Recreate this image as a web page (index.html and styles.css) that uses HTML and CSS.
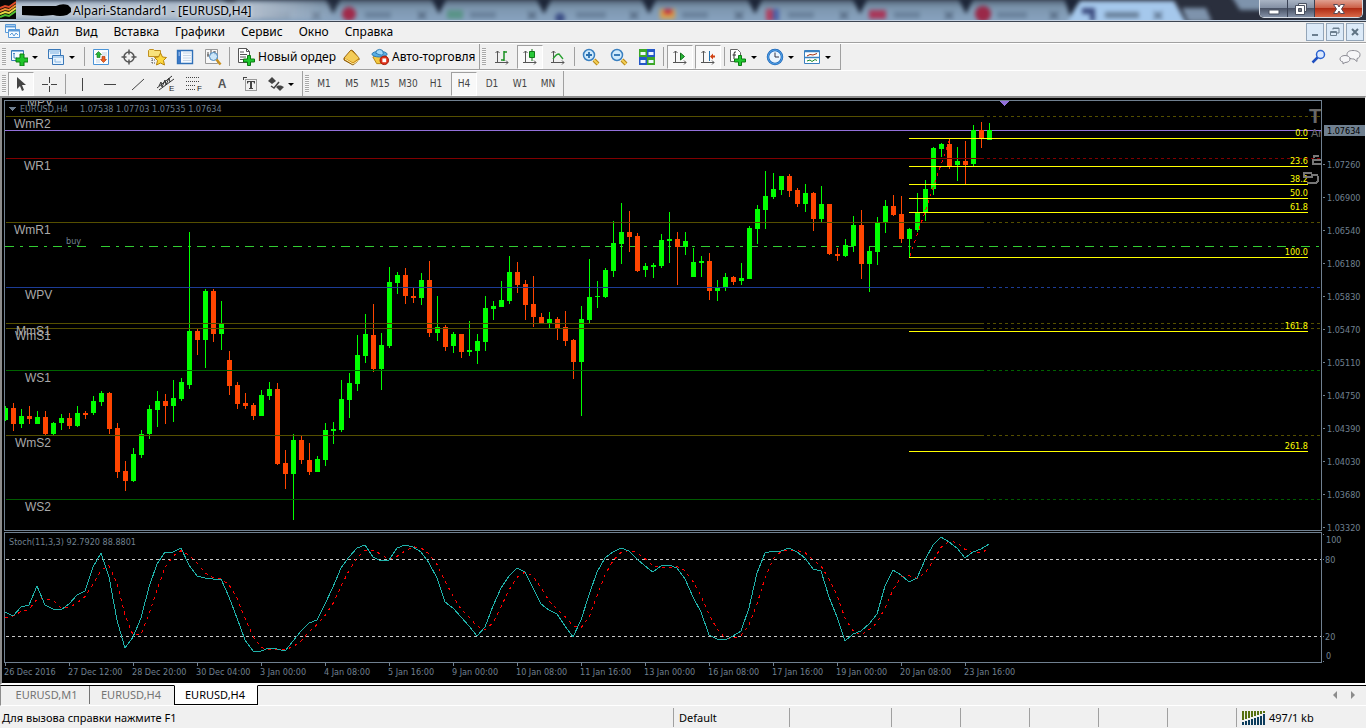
FILE: index.html
```html
<!DOCTYPE html>
<html lang="ru">
<head>
<meta charset="utf-8">
<title>Alpari-Standard1 - [EURUSD,H4]</title>
<link rel="stylesheet" href="styles.css">
</head>
<body>
<header class="titlebar">
  <svg class="glass" aria-hidden="true">
    <defs>
      <linearGradient id="gl" x1="0" y1="0" x2="0" y2="1"><stop offset="0" stop-color="#54667a"/><stop offset=".3" stop-color="#7d96ae"/><stop offset="1" stop-color="#8ca8c6"/></linearGradient>
      <linearGradient id="fade" x1="0" x2="1" y1="0" y2="0"><stop offset="0" stop-color="#b9c5d3"/><stop offset=".75" stop-color="#afbccb"/><stop offset="1" stop-color="#afbccb" stop-opacity="0"/></linearGradient>
    </defs>
    <rect width="100%" height="24" fill="#2a2f3d"/>
    <g class="soft">
      <rect x="-9" width="1080" height="26" fill="url(#gl)"/>
      <path d="M1066 26 1078 1h96l14 25z" fill="#a5c8ec"/>
      <path d="M1182 8h24l6 14h-24zM1230-6h34v16h-24z" fill="#7e93ac"/>
      <path d="M222-2h16l-8 16zM325-2h16l-8 16zM431-2h16l-8 16zM536-2h16l-8 16zM641-2h16l-8 16zM747-2h16l-8 16zM852-2h16l-8 16zM958-2h16l-8 16zM1064-2h18l-12 18z" fill="#1d2638"/>
      <circle cx="349" cy="14" r="7" fill="#a02a4a"/><rect x="447" y="10" width="16" height="9" fill="#5a9488"/><circle cx="560" cy="18" r="5" fill="#3d4f86"/><rect x="660" y="9" width="15" height="10" fill="#d8a04a"/><rect x="664" y="9" width="8" height="5" fill="#c03040"/>
      <rect x="766" y="9" width="7" height="12" fill="#b04060"/><rect x="773" y="9" width="6" height="12" fill="#4a62a8"/><rect x="869" y="10" width="17" height="9" fill="#a8385a"/><circle cx="983" cy="14" r="8" fill="#9a2848"/><path d="M1082 8h13v13h-5v-7h-8z" fill="#3c4c80"/>
      <path d="M260 15h30M365 15h26M470 15h26M576 15h30M682 15h26M788 15h26M894 15h26M997 15h30M1105 15h34" stroke="#6a829c" stroke-width="6"/>
      <path d="m312 12 8 7m0-7-8 7M418 12l8 7m0-7-8 7M528 12l8 7m0-7-8 7M630 12l8 7m0-7-8 7M735 12l8 7m0-7-8 7M840 12l8 7m0-7-8 7M945 12l8 7m0-7-8 7M1050 12l8 7m0-7-8 7M1154 12l8 7m0-7-8 7" stroke="#4d6078" stroke-width="2"/>
    </g>
    <rect y="2" width="340" height="17" fill="url(#fade)" class="soft"/>
  </svg>
  <svg class="applogo" width="16" height="19" viewBox="0 0 16 19"><path fill="#080808" d="M0 0h16v19H0z"/><g fill="none" stroke-width="2"><path stroke="#e04a28" d="m0 8 5-2 4 1 7-5"/><path stroke="#f08a30" d="m0 11 5-2 4 1 7-5"/><path stroke="#e8d840" d="m0 14 5-2 4 1 7-5"/><path stroke="#50c030" d="m0 17 5-2 4 1 7-5"/></g></svg>
  <svg class="redact" width="49" height="13" viewBox="0 0 49 13"><path d="M0 2 34 2Q40-1 46 1L49 4V8L45 11Q38 13 31 11L20 12 0 11z"/></svg>
  <h1>Alpari-Standard1 - [EURUSD,H4]</h1>
  <div class="winbtns">
    <button class="min" aria-label="Свернуть"><svg width="14" height="14"><path d="M2 8h10v4H2z" fill="#fff" stroke="#4b5262"/></svg></button>
    <button class="max" aria-label="Развернуть"><svg width="14" height="14"><path d="M4.500 1.500h8v8h-8z" fill="#eee" stroke="#4b5262"/><path d="M1.500 3.500h9v9h-9z" fill="#fff" stroke="#4b5262"/><path d="M4.500 6.500h3v3h-3z" fill="#777" stroke="#4b5262"/></svg></button>
    <button class="close" aria-label="Закрыть"><svg width="14" height="14"><path d="M1.500 2.500h4L7 5l1.500-2.500h4L9.500 7l3 4.500h-4L7 9l-1.500 2.500h-4L4.500 7z" fill="#fff" stroke="#5a4a55"/></svg></button>
  </div>
</header>

<nav class="menubar">
  <svg class="menuicon" width="16" height="16" viewBox="0 0 16 16" fill="#f4faff" stroke="#5b9ad8"><path d="M.5.500h10v8H.5z"/><path d="M.5 2.500h10" stroke-width="2"/><path d="M3.500 5.500h11v8h-11z"/><path d="M3.500 6.500h11" stroke-width="2"/><path d="m5 11 2-2 2 3 2-3 2 2" fill="none"/></svg>
  <button>Файл</button><button>Вид</button><button>Вставка</button><button>Графики</button><button>Сервис</button><button>Окно</button><button>Справка</button>
  <div class="mdi">
    <button aria-label="Свернуть окно"><svg width="12" height="12"><path d="M3 8h6v2H3z" fill="#6c7f90"/></svg></button>
    <button aria-label="Восстановить окно"><svg width="12" height="12" fill="none" stroke="#6c7f90"><path d="M4 3.500V2h6v5H8M4 2.500h6" /><path d="M1.500 5.500h6v4h-6zM2 6.500h5"/></svg></button>
    <button aria-label="Закрыть окно"><svg width="12" height="12"><path d="m3 3 6 6m0-6L3 9" stroke="#5f7384" stroke-width="2"/></svg></button>
  </div>
</nav>

<div class="toolrow">
  <div class="bar raised">
    <i class="grip"></i>
    <button class="dd" aria-label="Новый график"><svg width="18" height="18" viewBox="0 0 18 18"><path d="M1.500 2.500h12v10h-12z" fill="#f5faff" stroke="#3a78b8"/><path d="M2 3.500h11" stroke="#8ab8e4"/><path d="M4 5v5h3M3 6l1-1 1 1" fill="none" stroke="#4a88c0"/><path d="M10 6h4v4h4v4h-4v4h-4v-4H6v-4h4z" fill="#1fc42a" stroke="#0a7a10"/></svg></button>
    <button class="dd" aria-label="Профили"><svg width="18" height="18" viewBox="0 0 18 18" fill="#e8f3fd" stroke="#3a78b8"><path d="M1.500 1.500h12v9h-12z"/><path d="M2 3h11M3 5h9" stroke="#7cb0e0"/><path d="M5.500 7.500h11v9h-11z"/><path d="M6 9h10" stroke="#7cb0e0"/><path d="M8 11v3h6" fill="none" stroke="#8ab8e4"/></svg></button>
    <i class="sep"></i>
    <button aria-label="Обзор рынка"><svg width="18" height="18" viewBox="0 0 18 18"><path d="M1.500 1.500h15v15h-15z" fill="#fbfdff" stroke="#4a94d8"/><path d="M4 12h4M10 5h5M10 7h5M4 14h4" stroke="#c5d5e5"/><path d="m6.500 3.500 3 3H8v3H5v-3H3.500z" fill="#28b838" stroke="#107018" stroke-width=".6"/><path d="m11.500 14.500-3-3H10v-3h3v3h1.500z" fill="#f06020" stroke="#a03008" stroke-width=".6"/></svg></button>
    <button aria-label="Навигатор"><svg width="18" height="18" viewBox="0 0 18 18" fill="none" stroke="#555"><circle cx="9" cy="9" r="5" stroke-width="1.500"/><path d="M9 1.500v5M9 11.500v5M1.500 9h5M11.500 9h5" stroke-width="1.500"/></svg></button>
    <button aria-label="Окно данных"><svg width="20" height="18" viewBox="0 0 20 18"><path d="M1.500 8.500v-6l1-1h4l1 1h6v6z" fill="#f8e27c" stroke="#c09020"/><path d="M5 10v6M5 12h4M5 15h4" stroke="#555" stroke-dasharray="1 1"/><path d="m13.500 5 2 4 4 .5-3 3 1 4.500-4-2-4 2 1-4.500-3-3 4-.5z" fill="#fcd840" stroke="#b88408"/></svg></button>
    <button aria-label="Терминал"><svg width="18" height="18" viewBox="0 0 18 18"><path d="M1.500 2.500h15v13h-15z" fill="#f5faff" stroke="#2f70b8" stroke-width="1.400"/><path d="M2 3h3v12H2z" fill="#3a78c8"/><path d="M2.500 5H4M2.500 7H4" stroke="#cfe4fa"/><path d="M7 5h8M7 7.500h8M7 10h8M7 12.500h8" stroke="#c8d6e6"/></svg></button>
    <button aria-label="Тестер стратегий"><svg width="18" height="18" viewBox="0 0 18 18"><path d="M1.500 1.500h12v14h-12z" fill="#f8f8f8" stroke="#999"/><path d="M4 4v5M3 7h2M7 2v5M11 3v4M9 4h2" stroke="#555"/><circle cx="9.500" cy="8.500" r="4" fill="#c4e4fa" fill-opacity=".85" stroke="#4a88c0"/><path d="m12.500 11.500 4 5" stroke="#c89020" stroke-width="2.500"/></svg></button>
    <i class="sep"></i>
    <button class="wide"><svg width="19" height="18" viewBox="0 0 19 18"><path d="M1.500.500h8l3 3v11h-11z" fill="#fff" stroke="#555"/><path d="M9.500.500v3h3M3 4h4M3 6.500h7M3 9h6M3 11.500h5" stroke="#555" fill="none"/><path d="M10.500 7.500h3v3.500h4v3h-4v3.500h-3V14h-4v-3h4z" fill="#20c830" stroke="#0a7a10"/></svg>Новый ордер</button>
    <button aria-label="MetaEditor"><svg width="18" height="18" viewBox="0 0 18 18"><path d="m1 10 7-8 2 1 6 7v2l-6 5L1 12z" fill="#c8860c" stroke="#8c5a08"/><path d="m1.500 10 6.500-7.500L16 10l-6 4.500z" fill="#f4cc58"/><path d="m2 11 8 5 6-4" stroke="#fff0b0" fill="none"/></svg></button>
    <button class="wide"><svg width="19" height="18" viewBox="0 0 20 18"><path d="m2 9 7-3 8 3-3 7H6z" fill="#f2c840" stroke="#b08010"/><ellipse cx="9" cy="6" rx="8" ry="3" fill="#58aee4" stroke="#2a78b0"/><path d="M5 5q0-4 4-4t4 4-8 0z" fill="#a0d8f8" stroke="#2a78b0"/><circle cx="14" cy="12.500" r="4.500" fill="#e03018" stroke="#a01808"/><path d="M12 10.500h4v4h-4z" fill="#fff"/></svg>Авто-торговля</button>
  </div>
  <div class="bar raised">
    <i class="grip"></i>
    <button aria-label="Бары"><svg width="18" height="18" viewBox="0 0 18 18" fill="none"><path d="M4.500 3v12M2 14.500h13M2.500 5l2-2 2 2M13 12.500l2 2-2 2" stroke="#555"/><path d="M11 3v10M11 4h3M8 12h3" stroke="#189020" stroke-width="1.500"/></svg></button>
    <button class="on" aria-label="Свечи"><svg width="18" height="18" viewBox="0 0 18 18"><path d="M4.500 3v12M2 14.500h13M2.500 5l2-2 2 2M13 12.500l2 2-2 2" stroke="#555" fill="none"/><path d="M11 1v12" stroke="#107010"/><path d="M8.500 3.500h5v6h-5z" fill="#28c838" stroke="#107818"/></svg></button>
    <button aria-label="Линия"><svg width="18" height="18" viewBox="0 0 18 18" fill="none"><path d="M4.500 3v12M2 14.500h13M2.500 5l2-2 2 2M13 12.500l2 2-2 2" stroke="#555"/><path d="M4 11q3-5 6-5l4 5" stroke="#28a030" stroke-width="1.300"/></svg></button>
    <i class="sep"></i>
    <button aria-label="Увеличить"><svg width="18" height="18" viewBox="0 0 18 18"><path d="m12 12 4 4" stroke="#b88818" stroke-width="4"/><path d="m12 12 4 4" stroke="#f4d058" stroke-width="2"/><circle cx="7" cy="7" r="5.500" fill="#cfeafc" stroke="#3a80c0" stroke-width="1.500"/><path d="M7 4v6M4 7h6" stroke="#2a70b0" stroke-width="1.800"/></svg></button>
    <button aria-label="Уменьшить"><svg width="18" height="18" viewBox="0 0 18 18"><path d="m12 12 4 4" stroke="#b88818" stroke-width="4"/><path d="m12 12 4 4" stroke="#f4d058" stroke-width="2"/><circle cx="7" cy="7" r="5.500" fill="#cfeafc" stroke="#3a80c0" stroke-width="1.500"/><path d="M4 7h6" stroke="#2a70b0" stroke-width="1.800"/></svg></button>
    <button aria-label="Окна мозаикой"><svg width="18" height="18" viewBox="0 0 18 18"><path d="M1 1h8v8H1zM9 9h8v8H9z" fill="#3ca828"/><path d="M9 1h8v8H9zM1 9h8v8H1z" fill="#2458c8"/><path d="M2.500 4h5v3h-5zM10.500 4h5v3h-5zM2.500 12h5v3h-5zM10.500 12h5v3h-5z" fill="#eef6ff"/></svg></button>
    <i class="sep"></i>
    <button class="on" aria-label="Автопрокрутка"><svg width="18" height="18" viewBox="0 0 18 18"><path d="M4.500 3v12M2 14.500h13M2.500 5l2-2 2 2M13 12.500l2 2-2 2" stroke="#555" fill="none"/><path d="m9.500 5 4 3.500-4 3.500z" fill="#28b838" stroke="#107018"/></svg></button>
    <button class="on" aria-label="Сдвиг графика"><svg width="18" height="18" viewBox="0 0 18 18"><path d="M4.500 3v12M2 14.500h13M2.500 5l2-2 2 2M13 12.500l2 2-2 2" stroke="#555" fill="none"/><path d="M10.500 3v10" stroke="#2070b0"/><path d="m11 8.500 3-3v2h2v2h-2v2z" fill="#d04010"/></svg></button>
    <i class="sep"></i>
    <button class="dd" aria-label="Индикаторы"><svg width="18" height="18" viewBox="0 0 18 18"><path d="M1.500 1.500h7l3 3v9h-10z" fill="#fff" stroke="#666"/><path d="M7 4q-2-1-2 2v5M3.500 7H7" stroke="#333" fill="none"/><path d="M9.500 7.500h3v3.500h4v3h-4v3.500h-3V14h-4v-3h4z" fill="#20c830" stroke="#0a7a10"/></svg></button>
    <button class="dd" aria-label="Периоды"><svg width="18" height="18" viewBox="0 0 18 18"><circle cx="9" cy="9" r="7" fill="#eaf5fe" stroke="#1c66b8" stroke-width="2.500"/><circle cx="9" cy="9" r="7" fill="none" stroke="#58a8ec" stroke-width="1"/><path d="M9 4.500V9h4" fill="none" stroke="#334"/></svg></button>
    <button class="dd" aria-label="Шаблоны"><svg width="18" height="18" viewBox="0 0 18 18"><path d="M1.500 2.500h15v13h-15z" fill="#fff" stroke="#3a80c0"/><path d="M2 3.500h14M2 9.500h14" stroke="#3a80c0" stroke-width="1.500"/><path d="m4 8 3-1.500 3 .5 4-1.500" stroke="#a03010" fill="none"/><path d="m4 13 3-1 2 1.500 3-2 2 1" stroke="#188828" fill="none"/></svg></button>
  </div>
  <div class="rightsearch">
    <button aria-label="Поиск"><svg width="16" height="16" viewBox="0 0 16 16"><circle cx="9.500" cy="5.500" r="4" fill="#dbe9ff" stroke="#2a62d0" stroke-width="1.500"/><path d="m6.500 8.500-5 5" stroke="#2050c0" stroke-width="2.500"/></svg></button>
    <button aria-label="Чат"><svg width="22" height="16" viewBox="0 0 22 16" fill="#f6f6f8" stroke="#8c8c94"><path d="M14 1.500c4 0 7 1.500 7 4s-1 3.500-3 4v3l-3-2.500c-4 0-7-1.500-7-4.500 0-2.500 2-4 6-4z"/><path d="M6 6.500c3 0 5 1.500 5 3.500s-2 3.500-5 3.500L4 15v-2c-2-.5-3-1.500-3-3 0-2 2-3.500 5-3.500z"/></svg></button>
  </div>
</div>

<div class="toolrow second">
  <div class="bar">
    <i class="grip"></i>
    <button class="on" aria-label="Курсор"><svg width="18" height="18" viewBox="0 0 18 18"><path d="M5 2v12l3-3 2 5 2-1-2-5h4z" fill="#444"/></svg></button>
    <button aria-label="Перекрестие"><svg width="18" height="18" viewBox="0 0 18 18"><path d="M9.500 2v6M9.500 11v6M2 9.500h6M11 9.500h6" stroke="#444"/></svg></button>
    <i class="sep"></i>
    <button aria-label="Вертикальная линия"><svg width="18" height="18"><path d="M9.500 3v13" stroke="#444"/></svg></button>
    <button aria-label="Горизонтальная линия"><svg width="18" height="18"><path d="M3 9.500h12" stroke="#444"/></svg></button>
    <button aria-label="Трендовая линия"><svg width="18" height="18"><path d="M3 15 15 4" stroke="#444"/></svg></button>
    <button aria-label="Канал"><svg width="20" height="20" viewBox="0 0 20 20" fill="none" stroke="#333"><path d="M1 14 16 2M3 16 18 5M3 12l2-4 1 5 3-7 1 5 3-7 1 4"/><text x="13" y="17" class="mini">E</text></svg></button>
    <button aria-label="Фибоначчи"><svg width="20" height="20" viewBox="0 0 20 20" stroke="#444"><path d="M2 3.500h14M2 7.500h14M2 11.500h10M2 15.500h9" stroke-dasharray="1 1"/><text x="13" y="17" class="mini">F</text></svg></button>
    <button class="glyph">A</button>
    <button aria-label="Метка"><svg width="18" height="18" viewBox="0 0 18 18"><path d="M4.500 4.500h11v11h-11z" fill="none" stroke="#444" stroke-dasharray="1 1"/><path d="M6 6h8v2.500h-1L12.500 7H11v6h1v1H8v-1h1V7H7.500L7 8.500H6zM2 2h4v1H3v2H2z" fill="#444"/></svg></button>
    <button class="dd" aria-label="Стрелки"><svg width="18" height="18" viewBox="0 0 18 18"><path d="m6 2 4 4-4 3-4-3zM14 16l-4-4 2-1.500h3L18 12z" fill="#444"/><path d="m5 11 3 2 5-6" fill="none" stroke="#444" stroke-width="1.500"/></svg></button>
  </div>
  <div class="bar tf">
    <i class="grip"></i>
    <button>M1</button><button>M5</button><button>M15</button><button>M30</button><button>H1</button><button class="on">H4</button><button>D1</button><button>W1</button><button>MN</button>
  </div>
</div>

<main class="chart">
  <svg class="plot" id="price"></svg>
  <svg class="axis" id="price-axis"></svg>
  <svg class="plot" id="stoch"></svg>
  <svg class="axis" id="stoch-axis"></svg>
  <ol class="times"><li>26 Dec 2016</li><li>27 Dec 12:00</li><li>28 Dec 20:00</li><li>30 Dec 04:00</li><li>3 Jan 00:00</li><li>4 Jan 08:00</li><li>5 Jan 16:00</li><li>9 Jan 00:00</li><li>10 Jan 08:00</li><li>11 Jan 16:00</li><li>13 Jan 00:00</li><li>16 Jan 08:00</li><li>17 Jan 16:00</li><li>19 Jan 00:00</li><li>20 Jan 08:00</li><li>23 Jan 16:00</li></ol>
</main>

<div class="tabs">
  <button>EURUSD,M1</button><button>EURUSD,H4</button><button class="active">EURUSD,H4</button>
  <div class="scroll">
    <button aria-label="Назад"><svg width="5" height="8"><path d="M5 0v8L1 4z" fill="#8c8c8c"/></svg></button>
    <button aria-label="Вперёд"><svg width="5" height="8"><path d="M0 0v8l4-4z" fill="#8c8c8c"/></svg></button>
  </div>
</div>

<footer class="status">
  <span class="hint">Для вызова справки нажмите F1</span><span class="c-profile">Default</span><span class="c-date"></span><span class="c-val"></span><span class="c-val"></span><span class="c-val"></span><span class="c-val"></span><span class="c-val"></span>
  <span class="c-net"><svg width="24" height="14" viewBox="0 0 24 14"><path d="M1 0v9M4 0v8M7 0v7M10 0v6M13 0v5M16 0v4M19 0v3M22 0v2" stroke="#56700f" stroke-width="2"/><path d="M1 11v3M4 10v4M7 9v5M10 8v6M13 7v7M16 6v8M19 5v9M22 3v11" stroke="#0c3c5c" stroke-width="2"/></svg>497/1 kb</span>
</footer>
<script src="chart.js"></script>
</body>
</html>
```
FILE: styles.css
```css
* { box-sizing: border-box; }
body {
  margin: 0;
  height: 100vh;
  display: flex;
  flex-direction: column;
  background: #f0f0f0;
  color: #000;
  font: 12px/16px "Noto Sans", "Open Sans", sans-serif;
  overflow: hidden;
}
button { border: 0; background: none; padding: 0; margin: 0; font: inherit; color: inherit; display: flex; align-items: center; justify-content: center; }
svg { display: block; flex: none; }

/* title bar */
.titlebar { position: relative; height: 22px; flex: none; display: flex; align-items: flex-start; border-bottom: 1px solid #3c4450; overflow: hidden; box-shadow: inset 0 -1px #c5d2e2; }
.glass { position: absolute; inset: 0; width: 100%; height: 20px; }
.soft { filter: blur(2px); }
.applogo, .redact, .titlebar h1, .winbtns { position: relative; }
.redact { margin: 4px 2px 0 6px; }
.titlebar h1 { margin: 3px 0 0; font-size: 12px; line-height: 16px; font-weight: 400; white-space: nowrap; text-shadow: 0 0 4px #fff; }
.winbtns { margin: 0 3px 0 auto; display: flex; border: 1px solid #d5dbe4; border-top: 0; border-radius: 0 0 5px 5px; overflow: hidden; }
.winbtns button { height: 17px; background: linear-gradient(#a9b4c4, #8490a4 45%, #4a5366 50%, #8390a6); border-right: 1px solid #3a4254; }
.winbtns .min { width: 28px; }
.winbtns .max { width: 27px; }
.winbtns .close { width: 47px; border: 0; background: linear-gradient(#e0a090, #cc6048 45%, #b02c14 50%, #d86848); }

/* menu */
.menubar { flex: none; height: 21px; display: flex; align-items: center; padding: 0 2px 0 5px; border-bottom: 1px solid #a0a0a0; }
.menuicon { margin-right: 7px; }
.menubar > button { margin-right: 16px; }
.mdi { margin-left: auto; display: flex; gap: 2px; }
.mdi button { width: 18px; height: 18px; background: #dceaf8; border: 1px solid #93a5b8; }

/* toolbars */
.toolrow { flex: none; display: flex; height: 27px; border-top: 1px solid #fff; }
.bar { display: flex; border-right: 1px solid #a0a0a0; height: 26px; padding-right: 2px; }
.raised { border-bottom: 1px solid #a0a0a0; box-shadow: 0 1px #fff; }
.bar button { width: 28px; height: 26px; }
.bar .dd { width: 37px; justify-content: flex-start; padding-left: 2px; gap: 4px; }
.bar .dd::after { content: ""; border: 3px solid transparent; border-top-color: #000; border-bottom: 0; }
.bar .wide { width: auto; padding: 0 2px 0 5px; gap: 2px; white-space: nowrap; }
.bar .on { width: 26px; height: 24px; margin: 1px; background: #f8f8f8; border: 1px solid #a0a0a0; border-right-color: #fff; border-bottom-color: #fff; }
.grip { flex: none; width: 4px; margin: 4px 2px 4px 2px; background: repeating-linear-gradient(#a8a8a8 0 1px, #f8f8f8 1px 2px); }
.sep { flex: none; width: 1px; margin: 3px 2px; background: #a0a0a0; }
.second { height: 26px; }
.second .bar { padding-right: 1px; }
.second .grip { margin-right: 1px; }
.glyph { font: bold 12px/16px "Liberation Sans", sans-serif; color: #555; }
.bar .glyph { font: bold 12px/16px "Liberation Sans", sans-serif; color: #555; }
.mini { font: 8px "Liberation Sans", sans-serif; fill: #222; stroke: none; }
.tf { font: 10px/14px "DejaVu Sans Condensed", "DejaVu Sans", sans-serif; color: #444; }
.rightsearch { margin-left: auto; display: flex; align-items: center; gap: 12px; padding-right: 5px; }

/* chart window */
.chart {
  flex: 1;
  min-height: 0;
  display: grid;
  grid-template: minmax(0, 1fr) 131px 19px / minmax(0, 1fr) 43px;
  row-gap: 1px;
  background: #000;
  border: 2px solid #a0a0a0;
  border-color: #8c8c8c #fff #fff #8c8c8c;
  border-right-width: 1px;
  padding: 2px 0 0 2px;
  font: 9px/12px "DejaVu Sans Condensed", "DejaVu Sans", sans-serif;
  color: #708090;
}
.plot { width: 100%; height: 100%; border: 1px solid #708090; shape-rendering: crispEdges; }
.axis { width: 43px; height: 100%; overflow: visible; shape-rendering: crispEdges; }
.chart text { fill: #708090; }
.chart .pivot { font: 12px "Liberation Sans", sans-serif; fill: #a9a9a9; }
.chart .fib { fill: #ff0; text-anchor: end; }
.chart .bid { fill: #000; }
.chart .mark { font: bold 20px "Liberation Sans", sans-serif; fill: #696969; }
.chart .note { font: 11px "Liberation Sans", sans-serif; fill: #696969; }
.times { grid-column: 1 / -1; margin: -1px 0 0; padding: 0; list-style: none; display: flex; overflow: hidden; white-space: nowrap; }
.times li { flex: 0 0 64px; }
.times li::before { content: ""; display: block; width: 1px; height: 3px; margin-left: 1px; background: #708090; }

/* chart tabs */
.tabs { flex: none; height: 21px; display: flex; align-items: flex-start; border-top: 1px solid #000; border-left: 1px solid #8c8c8c; color: #747474; font-size: 11px; border-bottom: 1px solid #fff; }
.tabs > button { height: 18px; width: 89px; padding-left: 3px; border-right: 1px solid #747474; }
.tabs > button + button { width: 84px; padding: 0 2px 0 0; border: 0; }
.tabs > button.active { background: #fff; color: #000; border: 1px solid #000; border-top-color: #fff; margin-top: -1px; height: 20px; }
.scroll { margin: 5px 10px 0 auto; display: flex; gap: 14px; }

/* status bar */
.status { flex: none; height: 22px; display: flex; padding: 2px 0 1px; font-size: 11px; }
.status span { border-left: 1px solid #a0a0a0; padding: 0 5px; display: flex; align-items: center; gap: 3px; white-space: nowrap; }
.status .hint { flex: 1; border: 0; padding-left: 2px; }
.status .c-profile { width: 116px; }
.status .c-date { width: 102px; }
.status .c-val { width: 69px; }
.status .c-net { width: 130px; }
```
FILE: chart.js
```js
// Candles: high, body top, body bottom, low, direction (1 up, 0 down), one every 8px.
const candles = `406,408,420,421,1 403,408,424,431,0 409,416,424,428,1 406,416,419,424,0 411,417,424,424,1 411,417,434,435,0 422,423,434,435,1 414,418,423,430,1 413,418,426,429,0 406,413,426,427,1 411,413,415,419,0 396,401,413,415,1 391,393,402,406,1 392,393,429,434,0 423,428,472,478,0 461,471,481,491,0 448,454,481,482,1 430,434,455,458,1 405,409,434,439,1 391,401,410,427,1 394,401,406,424,0 380,398,406,422,1 378,382,399,401,1 232,331,385,389,1 329,331,340,355,0 289,291,340,368,1 289,291,334,342,0 301,324,334,350,1 351,360,386,395,0 382,385,404,409,0 393,403,406,409,0 403,405,416,420,0 390,395,416,416,1 382,389,396,400,1 383,389,464,465,0 450,463,474,489,0 434,440,474,520,1 436,440,460,464,0 443,460,472,475,0 456,459,472,472,1 423,430,460,466,1 422,429,431,444,1 380,399,430,432,1 373,383,400,418,1 335,355,384,391,1 314,334,356,363,1 304,335,369,372,0 333,345,369,390,1 267,282,346,348,1 272,275,283,294,1 268,275,296,304,0 287,296,298,303,0 273,280,298,305,1 261,280,333,337,0 296,327,333,341,1 325,327,347,351,0 332,334,346,353,1 334,334,352,358,0 321,350,352,356,1 334,341,351,364,1 296,308,342,351,1 301,306,309,320,1 281,300,307,307,1 256,272,301,304,1 262,272,285,293,0 280,284,305,320,0 276,304,317,327,0 313,317,323,323,0 312,319,323,328,1 317,319,328,340,0 311,327,341,346,0 339,340,362,379,0 306,319,362,416,1 259,297,320,323,1 281,296,297,308,1 268,270,297,298,1 221,243,271,277,1 203,232,244,264,1 211,232,237,252,0 233,236,271,272,0 263,266,270,277,1 263,265,267,278,1 234,240,266,268,1 212,239,241,263,1 232,239,247,285,0 232,241,247,255,1 248,262,277,277,1 256,261,263,277,1 253,261,291,300,0 280,288,291,301,1 273,277,287,291,1 276,277,282,285,0 263,278,281,285,1 226,228,279,279,1 205,209,229,244,1 171,196,210,229,1 173,189,197,199,1 176,176,190,195,1 174,176,191,197,0 188,190,204,207,0 184,193,204,212,1 192,193,219,231,0 186,204,219,222,1 204,204,254,255,0 248,254,256,261,0 239,245,256,257,1 216,225,246,252,1 210,225,264,279,0 246,251,264,292,1 217,222,252,265,1 200,206,222,233,1 195,206,215,216,0 196,214,239,243,0 228,229,239,257,1 193,212,230,232,1 180,189,212,221,1 147,148,189,195,1 143,144,149,157,1 139,144,166,169,0 147,161,165,181,1 141,161,165,184,0 125,130,164,166,1 122,130,138,148,0 123,130,140,140,1`
  .split(' ').map(c => c.split(',').map(Number));

// Stochastic %K, one value every 8px.
const k = [612,616,607,605,586,605,609,610,604,595,591,567,553,577,620,648,637,618,587,564,552,552,548,565,576,578,579,579,597,618,640,651,651,648,649,651,641,631,623,620,604,587,568,557,548,545,557,561,560,548,545,547,552,563,578,602,608,617,626,636,627,606,588,576,568,572,588,604,610,614,626,637,620,595,572,558,552,548,551,559,566,572,566,565,568,579,597,612,635,639,640,636,631,608,573,553,551,551,548,552,558,569,571,597,617,641,634,631,624,614,586,570,575,582,578,560,545,537,542,548,558,552,549,544];

const rect = (x, y, w, h, c) => `<rect x="${x}" y="${y}" width="${w}" height="${h}" fill="${c}"/>`;
const line = (x1, x2, y, c, dash = '') =>
  `<line x1="${x1}" x2="${x2}" y1="${y + 0.5}" y2="${y + 0.5}" stroke="${c}" stroke-dasharray="${dash}"/>`;
const text = (x, y, s, cls = '') => `<text x="${x}" y="${y}" class="${cls}">${s}</text>`;
const draw = (id, dx, dy, body) => {
  document.getElementById(id).innerHTML = `<g transform="translate(${-dx} ${-dy})">${body}</g>`;
};

// Price pane
let p = line(5, '110%', 130, '#9370db') + line(5, '110%', 246, '#32cd32', '9 6 3 6') + rect(88, 244, 11, 5, '#000');
candles.forEach(([hi, top, bot, lo, up], i) => {
  const x = 5 + i * 8, c = up ? '#00ff00' : '#ff4500';
  p += rect(x, hi, 1, lo - hi, c) + rect(x - 2, top, 5, bot - top, c);
});
const olive = '#554f00';
[[116, olive], [158, '#800000'], [222, olive], [287, '#1c3c96'], [323, olive], [328, olive], [370, '#006400'], [435, olive], [499, '#005a00']]
  .forEach(([y, c]) => { p += line(6, 984, y, c) + line(987, '110%', y, c, '3 3'); });
p += '<path d="M910 256 949 141" stroke="#f00" stroke-dasharray="3 4" fill="none"/>';
[[138, '0.0'], [166, '23.6'], [184, '38.2'], [198, '50.0'], [212, '61.8'], [257, '100.0'], [331, '161.8'], [451, '261.8']]
  .forEach(([y, s]) => { p += line(909, 1308, y, '#ff0') + text(1308, y - 2, s, 'fib'); });
[[27, 106, 'MPV'], [14, 128, 'WmR2'], [24, 170, 'WR1'], [14, 234, 'WmR1'], [25, 299, 'WPV'], [16, 335, 'MmS1'], [15, 340, 'WmS1'], [25, 382, 'WS1'], [15, 447, 'WmS2'], [25, 511, 'WS2']]
  .forEach(([x, y, s]) => { p += text(x, y, s, 'pivot'); });
p += '<path d="M8 107h8l-4 4z" fill="#708090"/><path d="M999 101h10l-5 5z" fill="#9370db"/>'
  + text(20, 112, 'EURUSD,H4') + text(80, 112, '1.07538 1.07703 1.07535 1.07634') + text(66, 244, 'buy')
  + text(1309, 123, 'T', 'mark') + text(1311, 137, 'Ar', 'note')
  + '<path d="M1314 158v-2h5M1321 160h-8v4h8M1304 172v5h9M1304 173h8M1311 175h5q2 0 2 4t-3 4h-8" fill="none" stroke="#777" stroke-width="2"/>';
draw('price', 5, 101, p);

// Price axis
let a = '';
['1.07260', '1.06900', '1.06540', '1.06180', '1.05830', '1.05470', '1.05110', '1.04750', '1.04390', '1.04030', '1.03680', '1.03320']
  .forEach((s, i) => { const y = 164 + i * 33; a += rect(1322, y, 2, 1, '#708090') + text(1326, y + 4, s); });
a += rect(1323, 125, 41, 11, '#708090') + text(1326, 134, '1.07634', 'bid');
draw('price-axis', 1321, 100, a);

// Stochastic pane; the signal is the three-period average of %K.
const pts = arr => arr.map((y, i) => `${5 + i * 8},${y}`).join(' ');
const d = k.map((v, i) => i < 2 ? [618, 616][i] : (v + k[i - 1] + k[i - 2]) / 3);
draw('stoch', 5, 533,
  line(6, '110%', 559, '#c8c8c8', '3 3') + line(6, '110%', 636, '#c8c8c8', '3 3')
  + `<polyline points="${pts(d)}" fill="none" stroke="#f00" stroke-dasharray="3 4"/>`
  + `<polyline points="${pts(k)}" fill="none" stroke="#20b2aa"/>`
  + text(9, 545, 'Stoch(11,3,3) 92.7920 88.8801'));
draw('stoch-axis', 1321, 532,
  rect(1322, 534, 1, 1, '#708090') + rect(1322, 559, 1, 1, '#708090') + rect(1322, 636, 1, 1, '#708090') + rect(1322, 661, 1, 1, '#708090')
  + text(1325, 543, '100') + text(1324, 563, '80') + text(1324, 640, '20') + text(1325, 659, '0'));
```
